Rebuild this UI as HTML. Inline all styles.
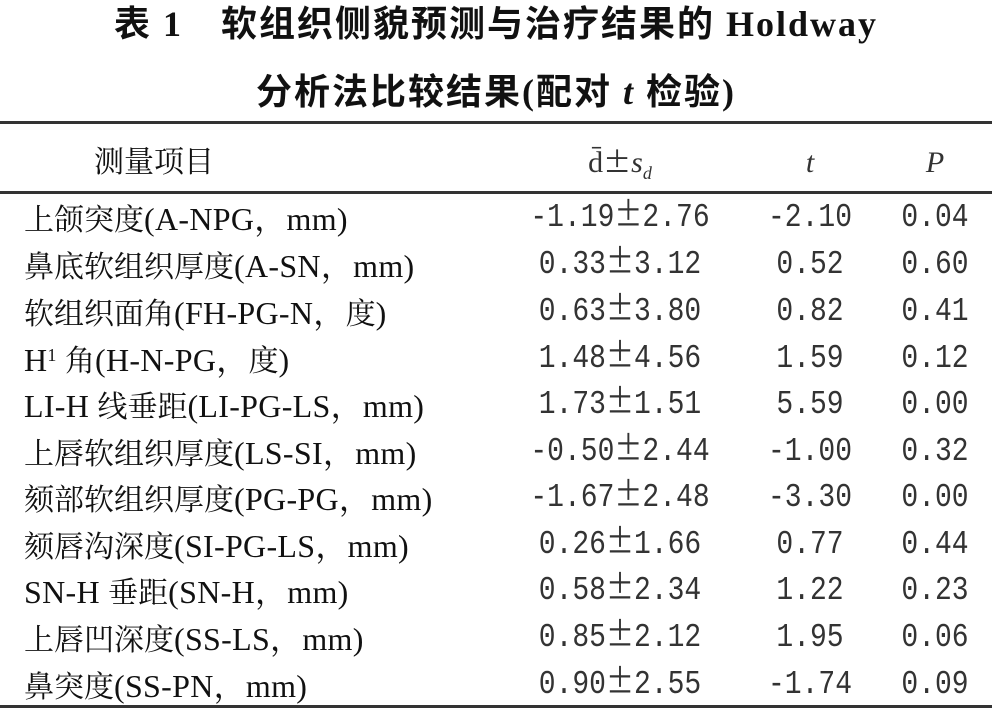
<!DOCTYPE html>
<html><head><meta charset="utf-8"><style>
body{margin:0;width:992px;height:722px;background:#fff;position:relative;overflow:hidden;font-family:"Liberation Serif","Noto Serif CJK SC",serif;color:#111}
.t{position:absolute;left:0;width:992px;text-align:center;font-weight:bold;font-size:36px;letter-spacing:2px;font-family:"Liberation Serif","Noto Sans CJK SC",sans-serif;line-height:40px}
.rule{position:absolute;left:0;width:992px;background:#333}
.r{position:absolute;left:0;width:992px;height:46px;font-size:30px;line-height:46px}
.l{position:absolute;left:24px;white-space:nowrap}
.l i{font-style:normal;font-size:32px;letter-spacing:.3px}
.n{position:absolute;font-family:"Liberation Mono",monospace;font-size:28px;line-height:46px;color:#333;text-align:center;white-space:nowrap;transform:scaleY(1.2)}
.n b{font-weight:normal;font-family:"Noto Sans CJK SC",sans-serif;font-size:28px;line-height:0}
.a{left:520px;width:200px}.b{left:760px;width:100px}.c{left:885px;width:100px}
sup{font-size:18px;line-height:0;vertical-align:10px}
</style></head><body>
<div class="t" style="top:4px">表 1　软组织侧貌预测与治疗结果的 Holdway</div>
<div class="t" style="top:72px">分析法比较结果(配对 <i>t</i> 检验)</div>
<div class="rule" style="top:121px;height:3px"></div>
<div class="r" style="top:140px"><span class="l" style="left:94px">测量项目</span>
<span class="n a" style="font-family:'Liberation Serif',serif;font-size:30px;transform:none">d̄<b>±</b><i>s<sub style="font-size:18px">d</sub></i></span>
<span class="n b" style="font-family:'Liberation Serif',serif;font-size:30px;transform:none"><i>t</i></span>
<span class="n c" style="font-family:'Liberation Serif',serif;font-size:30px;transform:none"><i>P</i></span></div>
<div class="rule" style="top:191px;height:3px"></div>
<div class="r" style="top:196px"><span class="l">上颌突度<i>(A-NPG，mm)</i></span><span class="n a">-1.19<b>±</b>2.76</span><span class="n b">-2.10</span><span class="n c">0.04</span></div>
<div class="r" style="top:243px"><span class="l">鼻底软组织厚度<i>(A-SN，mm)</i></span><span class="n a">0.33<b>±</b>3.12</span><span class="n b">0.52</span><span class="n c">0.60</span></div>
<div class="r" style="top:290px"><span class="l">软组织面角<i>(FH-PG-N，</i>度<i>)</i></span><span class="n a">0.63<b>±</b>3.80</span><span class="n b">0.82</span><span class="n c">0.41</span></div>
<div class="r" style="top:337px"><span class="l"><i>H<sup>1</sup> </i>角<i>(H-N-PG，</i>度<i>)</i></span><span class="n a">1.48<b>±</b>4.56</span><span class="n b">1.59</span><span class="n c">0.12</span></div>
<div class="r" style="top:383px"><span class="l"><i>LI-H </i>线垂距<i>(LI-PG-LS，mm)</i></span><span class="n a">1.73<b>±</b>1.51</span><span class="n b">5.59</span><span class="n c">0.00</span></div>
<div class="r" style="top:430px"><span class="l">上唇软组织厚度<i>(LS-SI，mm)</i></span><span class="n a">-0.50<b>±</b>2.44</span><span class="n b">-1.00</span><span class="n c">0.32</span></div>
<div class="r" style="top:476px"><span class="l">颏部软组织厚度<i>(PG-PG，mm)</i></span><span class="n a">-1.67<b>±</b>2.48</span><span class="n b">-3.30</span><span class="n c">0.00</span></div>
<div class="r" style="top:523px"><span class="l">颏唇沟深度<i>(SI-PG-LS，mm)</i></span><span class="n a">0.26<b>±</b>1.66</span><span class="n b">0.77</span><span class="n c">0.44</span></div>
<div class="r" style="top:569px"><span class="l"><i>SN-H </i>垂距<i>(SN-H，mm)</i></span><span class="n a">0.58<b>±</b>2.34</span><span class="n b">1.22</span><span class="n c">0.23</span></div>
<div class="r" style="top:616px"><span class="l">上唇凹深度<i>(SS-LS，mm)</i></span><span class="n a">0.85<b>±</b>2.12</span><span class="n b">1.95</span><span class="n c">0.06</span></div>
<div class="r" style="top:663px"><span class="l">鼻突度<i>(SS-PN，mm)</i></span><span class="n a">0.90<b>±</b>2.55</span><span class="n b">-1.74</span><span class="n c">0.09</span></div>
<div class="rule" style="top:705px;height:3px"></div>
</body></html>
